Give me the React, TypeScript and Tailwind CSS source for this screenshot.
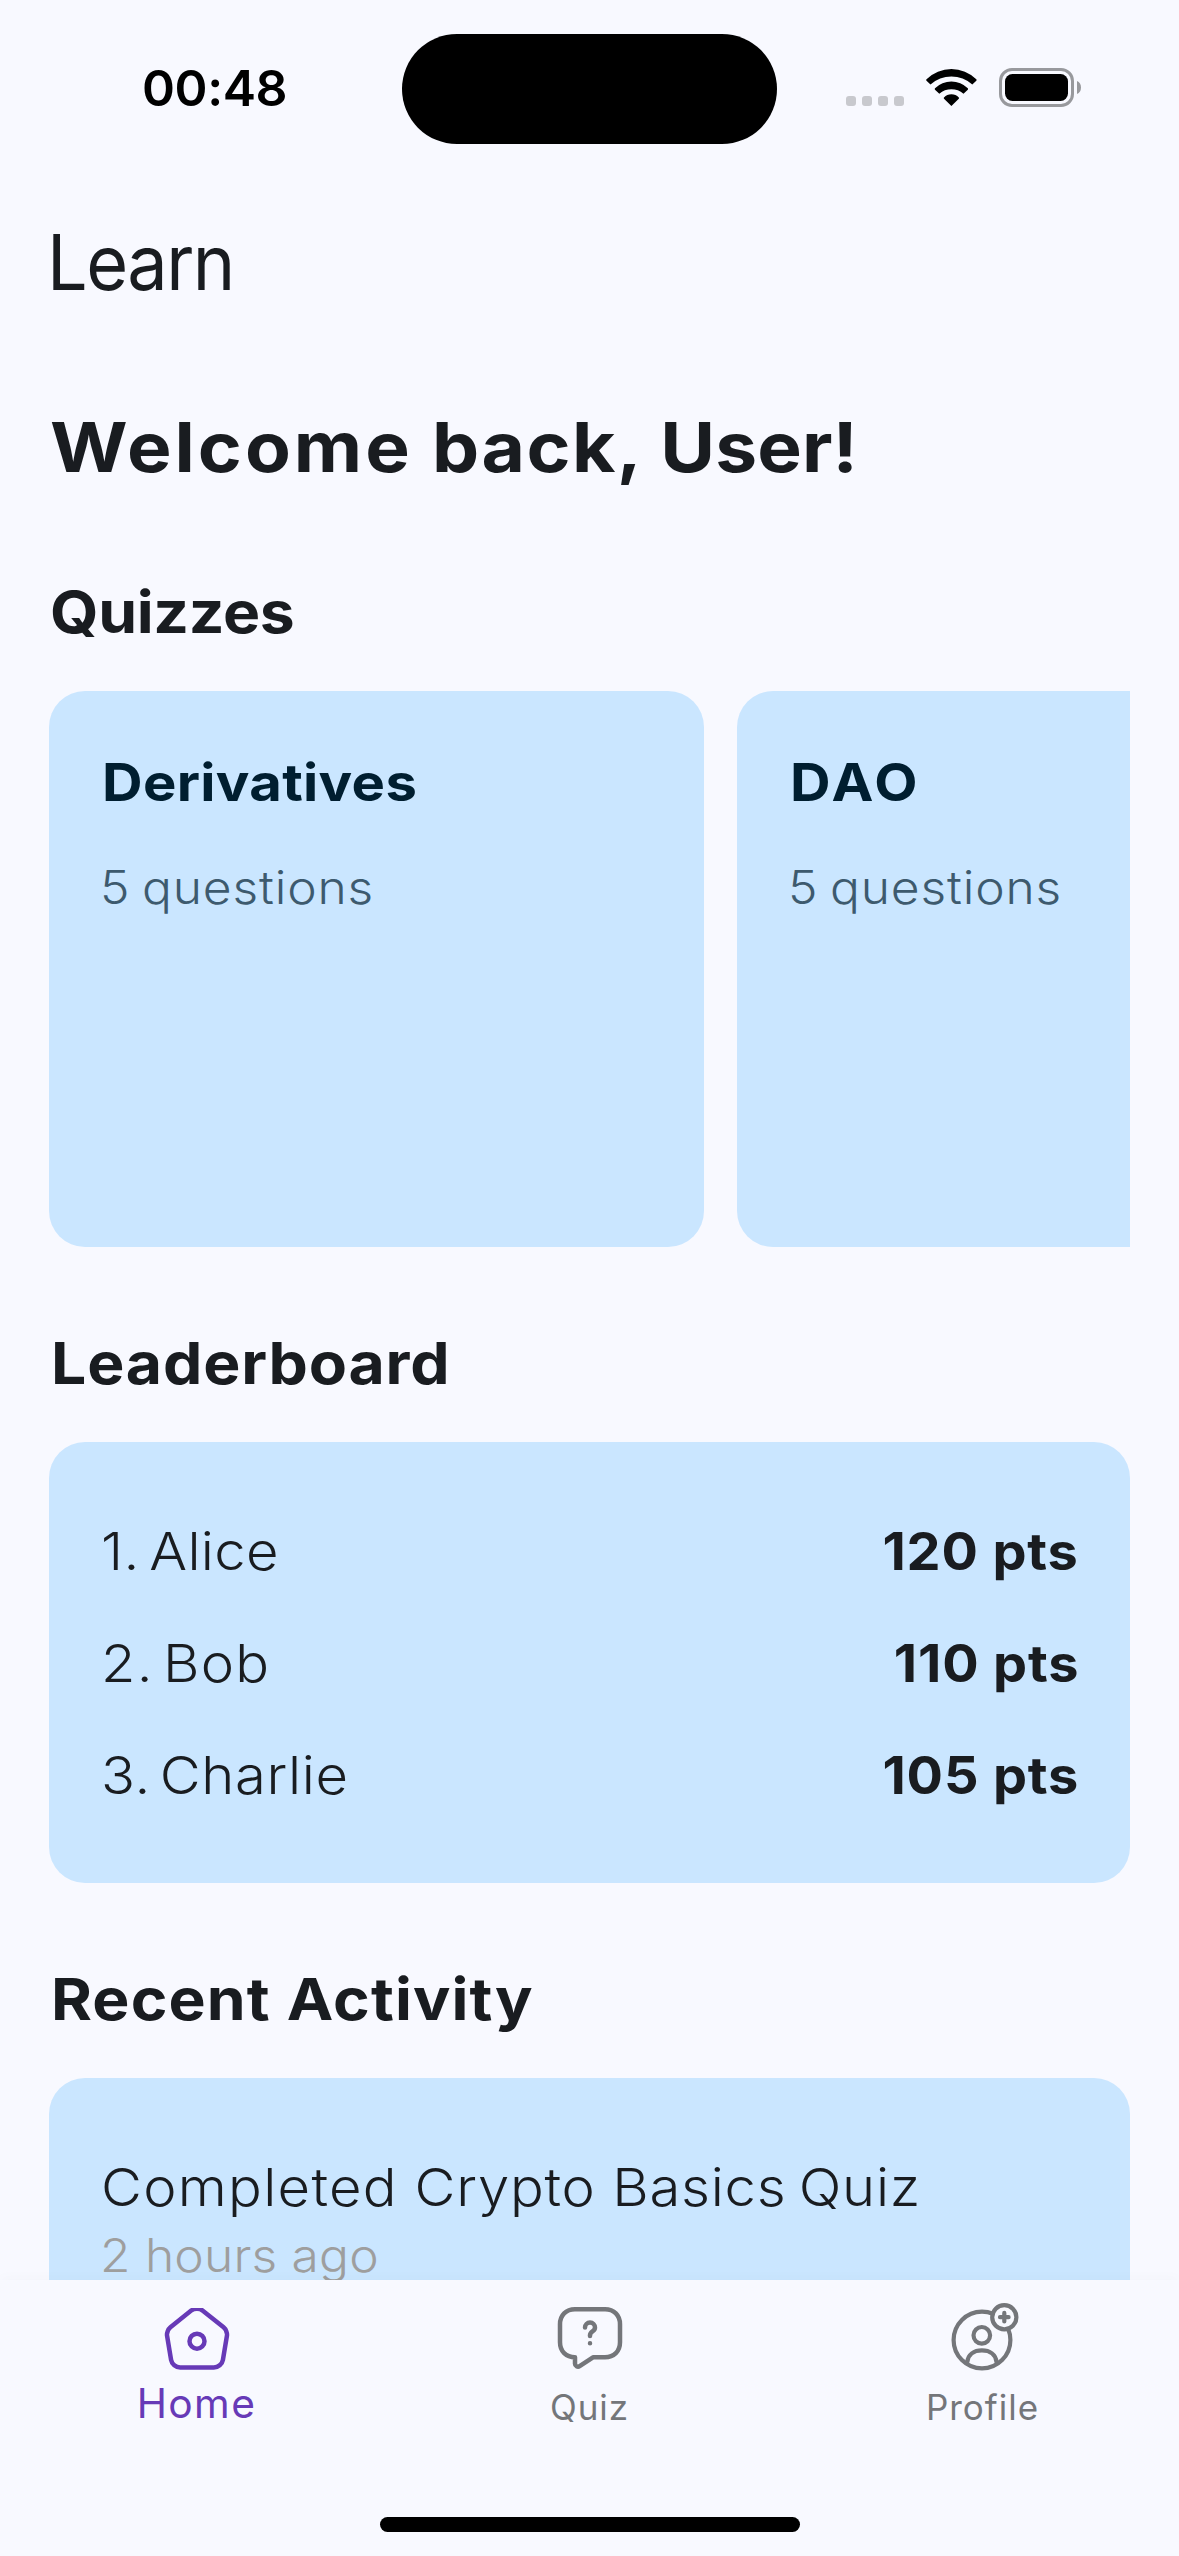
import type { ReactNode } from "react";

const quizzes = [
  { title: "Derivatives", questions: "5 questions", tracking: "tracking-[0.3px]" },
  { title: "DAO", questions: "5 questions", tracking: "tracking-[3px]" },
];

const leaders = [
  { name: "1. Alice", points: "120 pts", tracking: "tracking-[0.3px] [word-spacing:-6px]" },
  { name: "2. Bob", points: "110 pts", tracking: "tracking-[1.1px] [word-spacing:-7px]" },
  { name: "3. Charlie", points: "105 pts", tracking: "tracking-[0.6px] [word-spacing:-7px]" },
];

function WifiIcon() {
  return (
    <svg className="mb-px ml-[22px] h-[37px] w-[51px] shrink-0" viewBox="0 0 51 37" fill="#000">
      <path d="M.5 10.2A35.5 35.5 0 0 1 50.3 10.2Q51 11 50.3 11.7L46.3 15.5A31 31 0 0 0 4.5 15.5L.5 11.7Q-.2 11 .5 10.2Z" />
      <path d="M9 19.3A23.4 23.4 0 0 1 41.8 19.3Q42.4 20 41.8 20.7L37.5 24.7A18.9 18.9 0 0 0 13.3 24.7L9 20.7Q8.4 20 9 19.3Z" />
      <path d="M18 28.6A10 10 0 0 1 32.8 28.6Q33.4 29.2 32.8 29.8L25.4 37L18 29.8Q17.4 29.2 18 28.6Z" />
    </svg>
  );
}

function StatusBar() {
  return (
    <div className="flex h-[177px] w-full shrink-0 pt-[33px] font-['Inter',sans-serif]">
      <div className="h-[111px] w-[402px] pl-[142px] text-[50px] leading-[110px] font-semibold tracking-[-0.4px] text-black">
        00:48
      </div>
      <div className="mt-[0.5px] h-[110.5px] w-[375px] rounded-full bg-black" />
      <div className="mt-[35px] ml-[69px] flex h-[39px] items-end">
        <div className="mb-px flex gap-[6px]">
          {[0, 1, 2, 3].map((i) => (
            <span key={i} className="h-[10px] w-[10px] rounded-[3px] bg-[#c8c9ce]" />
          ))}
        </div>
        <WifiIcon />
        <div className="ml-[22px] h-[39px] w-[75px] rounded-[13px] border-[3px] border-[#98999d] p-[3px]">
          <div className="h-[27px] w-[63px] rounded-[7.5px] bg-black" />
        </div>
        <svg className="mb-[13px] ml-[3px] h-[13px] w-[4px]" viewBox="0 0 4 13" fill="#98999d">
          <path d="M0 0Q4 1.8 4 6.5T0 13Z" />
        </svg>
      </div>
    </div>
  );
}

function SectionTitle({ children, className }: { children: ReactNode; className: string }) {
  return (
    <h2 className={`mt-20 h-[72px] w-max origin-left scale-x-[1.08] text-[57.8px] leading-[72px] font-bold whitespace-nowrap ${className}`}>
      {children}
    </h2>
  );
}

function HomeIcon() {
  return (
    <svg className="mt-[6px] h-[66px] w-[72px]" viewBox="0 1.95 24 22" fill="none" stroke="currentColor" strokeWidth="1.5" strokeLinecap="round" strokeLinejoin="round">
      <path d="M10.07 2.82L3.14 8.37c-.78.62-1.28 1.93-1.11 2.91l1.33 7.96c.24 1.42 1.6 2.57 3.04 2.57h11.2c1.43 0 2.8-1.16 3.04-2.57l1.33-7.96c.16-.98-.34-2.29-1.11-2.91l-6.93-5.54c-1.07-.86-2.8-.86-3.86-.01Z" />
      <circle cx="12" cy="13" r="2.5" />
    </svg>
  );
}

function QuizIcon() {
  return (
    <svg className="h-[72px] w-[72px]" viewBox="0 0 24 24" fill="none" stroke="currentColor" strokeWidth="1.5" strokeLinecap="round" strokeLinejoin="round">
      <path d="M17 18.43h-4l-4.45 2.96A.997.997 0 0 1 7 20.56v-2.13c-3 0-5-2-5-5v-6c0-3 2-5 5-5h10c3 0 5 2 5 5v6c0 3-2 5-5 5Z" />
      <path d="M12 11.36v-.21c0-.68.42-1.04.84-1.33.41-.28.82-.64.82-1.3 0-.92-.74-1.66-1.66-1.66-.92 0-1.66.74-1.66 1.66M11.995 13.75h.009" />
    </svg>
  );
}

function ProfileIcon() {
  return (
    <svg className="h-[72px] w-[72px]" viewBox="0 0 72 72" fill="none" stroke="currentColor" strokeWidth="4.2" strokeLinecap="round">
      <circle cx="35" cy="38" r="28.4" />
      <circle cx="34.8" cy="33.3" r="8.3" />
      <path d="M20.3 60C21 52.5 27 48.4 34.9 48.4S48.8 52.5 49.5 60" />
      <circle cx="57.3" cy="15.2" r="12.1" fill="#f8f9ff" />
      <path d="M53 15.2h8.6M57.3 10.9v8.6" />
    </svg>
  );
}

export default function App() {
  return (
    <div className="relative flex h-[2556px] w-[1179px] flex-col overflow-hidden bg-[#f8f9ff] font-['Inter',sans-serif] text-[#191c20]">
      <StatusBar />

      <header className="ml-[47px] flex h-[170px] shrink-0 items-center">
        <h1 className="origin-left scale-x-[0.94] text-[76.5px] leading-[96px] tracking-[-1.6px]">Learn</h1>
      </header>

      <main className="min-h-0 flex-1 overflow-hidden px-[49px]">
        <h2 className="mt-[52px] ml-px h-24 w-max origin-left scale-x-[1.08] text-[69.3px] leading-[96px] font-bold tracking-[1.4px] whitespace-nowrap">
          <span className="tracking-[2.8px]">Welcome</span> back, <span className="tracking-[0.1px]">User!</span>
        </h2>

        <SectionTitle className="mt-[81px] ml-px tracking-[-0.3px]">Quizzes</SectionTitle>
        <div className="mt-[43px] flex gap-[33px] overflow-hidden">
          {quizzes.map((quiz) => (
            <article key={quiz.title} className="h-[556px] w-[655px] shrink-0 rounded-[36px] bg-[#cae6ff] px-[53px] pt-[55px]">
              <h3 className={`h-[74px] w-max origin-left scale-x-[1.08] text-[52px] leading-[74px] font-bold text-[#001e30] ${quiz.tracking}`}>
                {quiz.title}
              </h3>
              <p className="mt-[34px] -ml-[2px] h-[66px] w-max origin-left scale-x-[1.08] text-[46px] leading-[66px] font-light tracking-[0.8px] text-[#3d5a6e] [word-spacing:-3px]">
                {quiz.questions}
              </p>
            </article>
          ))}
        </div>

        <SectionTitle className="ml-[2px] tracking-[0.8px]">Leaderboard</SectionTitle>
        <ol className="mt-[43px] h-[441px] rounded-[36px] bg-[#cae6ff] px-[54px] pt-[54px]">
          {leaders.map((leader) => (
            <li key={leader.name} className="flex h-28 items-center justify-between text-[52px]">
              <span className={`-ml-[2px] origin-left scale-x-[1.08] font-light ${leader.tracking}`}>{leader.name}</span>
              <span className="-mr-[3px] origin-right scale-x-[1.04] font-bold tracking-[0.8px]">{leader.points}</span>
            </li>
          ))}
        </ol>

        <SectionTitle className="ml-[2px] tracking-[1.05px]">Recent Activity</SectionTitle>
        <div className="mt-[43px] h-[400px] rounded-[36px] bg-[#cae6ff] px-[54px] pt-[75px]">
          <p className="-ml-[2px] h-[70px] w-max origin-left scale-x-[1.08] text-[52px] leading-[70px] font-light tracking-[0.7px]">
            <span className="tracking-[1.2px]">Completed</span> Crypto Basics <span className="-ml-[4px]">Quiz</span>
          </p>
          <p className="-ml-[3px] h-[66px] w-max origin-left scale-x-[1.08] text-[46px] leading-[65px] font-light tracking-[0.2px] text-[#9e9e9e]">
            2 hours ago
          </p>
        </div>
      </main>

      <nav className="relative grid h-[276px] shrink-0 grid-cols-3 bg-[#f8f9ff] pt-[22px] text-[35px] text-[#74767a] shadow-[0_-3px_12px_rgba(0,0,0,0.02)]">
        <div className="flex flex-col items-center text-[#673ab7]">
          <HomeIcon />
          <span className="mt-[5px] text-[40.7px] leading-[50px] tracking-[1.4px]">Home</span>
        </div>
        <div className="flex flex-col items-center">
          <QuizIcon />
          <span className="mt-2 leading-[50px] tracking-[0.9px]">Quiz</span>
        </div>
        <div className="flex flex-col items-center">
          <ProfileIcon />
          <span className="mt-2 leading-[50px] tracking-[1px]">Profile</span>
        </div>
        <div className="absolute bottom-6 left-[380px] h-[15px] w-[420px] rounded-full bg-black" />
      </nav>
    </div>
  );
}
